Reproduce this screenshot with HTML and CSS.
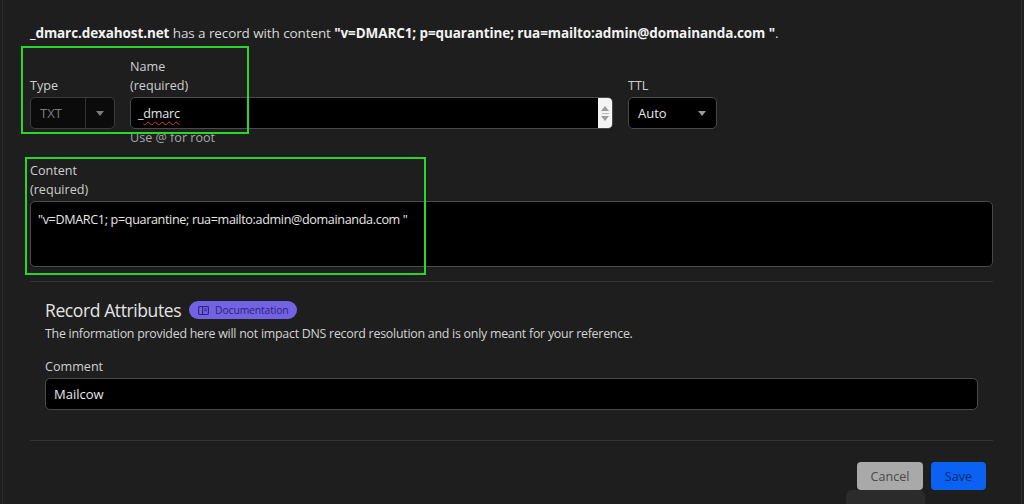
FILE: index.html
```html
<!DOCTYPE html>
<html lang="en">
<head>
    <meta charset="UTF-8">
    <title>Edit DNS record</title>
    <link rel="stylesheet" href="styles.css">
</head>
<body>
    <div class="panel">
        <p class="summary">
            <b>_dmarc.dexahost.net</b> has a record with content <b>"v=DMARC1; p=quarantine; rua=mailto:admin@domainanda.com "</b>.
        </p>

        <div class="record-row">
            <div class="field field-type">
                <label class="field-label">Type</label>
                <div class="select select-disabled">
                    <span class="select-value">TXT</span>
                    <span class="select-arrow"></span>
                </div>
            </div>

            <div class="field field-name">
                <label class="field-label">Name<br>(required)</label>
                <div class="input">
                    <span class="input-value">_<span class="typo">dmarc</span></span>
                    <span class="spinner">
                        <span class="spin-up"></span>
                        <span class="spin-line"></span>
                        <span class="spin-down"></span>
                    </span>
                </div>
                <span class="field-help">Use @ for root</span>
            </div>

            <div class="field field-ttl">
                <label class="field-label">TTL</label>
                <div class="select">
                    <span class="select-value">Auto</span>
                    <span class="select-arrow"></span>
                </div>
            </div>

            <span class="highlight highlight-top"></span>
        </div>

        <div class="content-block">
            <div class="field">
                <label class="field-label">Content<br>(required)</label>
                <div class="textarea">"v=DMARC1; p=quarantine; rua=mailto:admin@domainanda.com "</div>
            </div>
            <span class="highlight highlight-content"></span>
        </div>

        <hr class="divider">

        <section class="attributes">
            <h2 class="section-title">
                Record Attributes
                <span class="badge">
                    <svg class="badge-icon" viewBox="0 0 12 10" width="11" height="9">
                        <rect x="0.6" y="0.6" width="10.8" height="8.8" rx="1" fill="none" stroke="#2d2375" stroke-width="1.2"/>
                        <line x1="5" y1="1" x2="5" y2="9" stroke="#2d2375" stroke-width="1.2"/>
                        <line x1="6.8" y1="3.2" x2="9.6" y2="3.2" stroke="#2d2375" stroke-width="1"/>
                        <line x1="6.8" y1="5.2" x2="9.6" y2="5.2" stroke="#2d2375" stroke-width="1"/>
                    </svg>
                    Documentation
                </span>
            </h2>
            <p class="section-desc">The information provided here will not impact DNS record resolution and is only meant for your reference.</p>

            <div class="field">
                <label class="field-label">Comment</label>
                <div class="input input-comment">
                    <span class="input-value">Mailcow</span>
                </div>
            </div>
        </section>

        <hr class="divider divider-bottom">

        <div class="actions">
            <button class="btn btn-cancel">Cancel</button>
            <button class="btn btn-save">Save</button>
            <span class="ghost-tip"></span>
        </div>
    </div>
</body>
</html>
```

FILE: styles.css
```css
* {
    margin: 0;
    padding: 0;
    box-sizing: border-box;
}

body {
    height: 504px;
    overflow: hidden;
    background: #1e1e1e;
    font-family: 'Open Sans', 'Noto Sans', sans-serif;
    color: #d6d6d6;
}

.panel {
    height: 100%;
    margin: 0 2px;
    padding: 0 28px 0 27px;
    border-left: 1px solid #2a2a2a;
    border-right: 1px solid #2e2e2e;
}

.summary {
    padding-top: 23px;
    font-size: 13.5px;
    line-height: 20px;
    color: #d8d8d8;
    letter-spacing: -0.1px;
}

.summary b {
    color: #f2f2f2;
    font-weight: 700;
}

/* rows */
.record-row {
    position: relative;
    display: flex;
    align-items: flex-start;
    margin-top: 14px;
}

.field {
    display: flex;
    flex-direction: column;
}

.field-type {
    width: 85px;
    padding-top: 19px;
}

.field-name {
    width: 483px;
    margin-left: 15px;
}

.field-ttl {
    width: 89px;
    margin-left: 15px;
    padding-top: 19px;
}

.field-label {
    font-size: 12.6px;
    line-height: 19px;
    color: #cfcfcf;
    margin-bottom: 2px;
}

.field-help {
    font-size: 12.6px;
    line-height: 18px;
    color: #a8a8a8;
}

.select,
.input {
    height: 32px;
    display: flex;
    align-items: center;
    background: #000;
    border: 1px solid #4a4a4a;
    border-radius: 5px;
    font-size: 13px;
    color: #e6e6e6;
}

.select {
    justify-content: space-between;
    padding: 0 10px 0 9px;
}

.select-disabled {
    background: #0b0b0b;
    border-color: #3c3c3c;
    color: #7a7a7a;
    padding-right: 0;
}

.select-disabled .select-arrow {
    width: 29px;
    height: 100%;
    border-left: 1px solid #333;
}

.select-arrow {
    display: flex;
    align-items: center;
    justify-content: center;
}

.select-arrow::after {
    content: '';
    border-left: 4.5px solid transparent;
    border-right: 4.5px solid transparent;
    border-top: 5px solid #9a9a9a;
}

.select-disabled .select-arrow::after {
    border-top-color: #7d7d7d;
}

.input {
    justify-content: space-between;
    padding-left: 7px;
}

.field-name .input-value {
    font-size: 12.6px;
    letter-spacing: -0.2px;
}

.typo {
    text-decoration: underline wavy #d33;
    text-decoration-thickness: 1px;
    text-underline-offset: 3px;
}

.spinner {
    width: 14px;
    height: 100%;
    background: #f4f4f4;
    display: flex;
    flex-direction: column;
    align-items: center;
    justify-content: center;
    gap: 2px;
    border-radius: 0 4px 4px 0;
}

.spin-up {
    border-left: 4px solid transparent;
    border-right: 4px solid transparent;
    border-bottom: 5px solid #9c9c9c;
}

.spin-down {
    border-left: 4px solid transparent;
    border-right: 4px solid transparent;
    border-top: 5px solid #9c9c9c;
}

.spin-line {
    width: 7px;
    height: 1px;
    background: #bbb;
}

/* annotation boxes */
.highlight {
    position: absolute;
    border: 2px solid #2bd62b;
    pointer-events: none;
}

.highlight-top {
    left: -9px;
    top: -11px;
    width: 228px;
    height: 88px;
}

.content-block {
    position: relative;
    margin-top: 14px;
}

.highlight-content {
    left: -5px;
    top: -4px;
    width: 401px;
    height: 118px;
}

.textarea {
    height: 66px;
    background: #000;
    border: 1px solid #4a4a4a;
    border-radius: 5px;
    padding: 9px 7px;
    font-size: 12.6px;
    color: #e6e6e6;
    letter-spacing: -0.35px;
}

.divider {
    border: none;
    height: 1px;
    background: #333;
    margin-top: 14px;
}

.attributes {
    padding: 0 15px;
}

.section-title {
    display: flex;
    align-items: center;
    gap: 8px;
    margin-top: 17px;
    font-size: 17.5px;
    font-weight: 400;
    line-height: 22px;
    color: #e4e4e4;
    letter-spacing: -0.4px;
}

.badge {
    display: inline-flex;
    align-items: center;
    gap: 6px;
    height: 18px;
    padding: 0 8px 0 9px;
    border-radius: 9px;
    background: #7462e4;
    color: #2d2375;
    font-size: 10.4px;
    letter-spacing: -0.15px;
}

.section-desc {
    margin-top: 4px;
    font-size: 12.4px;
    line-height: 18px;
    color: #d4d4d4;
    letter-spacing: -0.25px;
}

.attributes .field {
    margin-top: 14px;
}

.attributes .field-label {
    margin-bottom: 2px;
}

.input-comment {
    padding-left: 8px;
}

.divider-bottom {
    margin-top: 30px;
}

.actions {
    position: relative;
    display: flex;
    justify-content: flex-end;
    gap: 8px;
    margin-top: 21px;
    padding-right: 7px;
}

.btn {
    height: 28px;
    border: none;
    border-radius: 4px;
    font-family: inherit;
    font-size: 12.6px;
    padding: 0 12px;
}

.btn-cancel {
    background: #a9a9a9;
    color: #4a4a4a;
    width: 66px;
}

.btn-save {
    background: #0b62f2;
    color: #0a2a6a;
    width: 55px;
}

.ghost-tip {
    position: absolute;
    right: 68px;
    top: 28px;
    width: 79px;
    height: 20px;
    border-radius: 6px 6px 0 0;
    background: #2b2b2b;
}
```
